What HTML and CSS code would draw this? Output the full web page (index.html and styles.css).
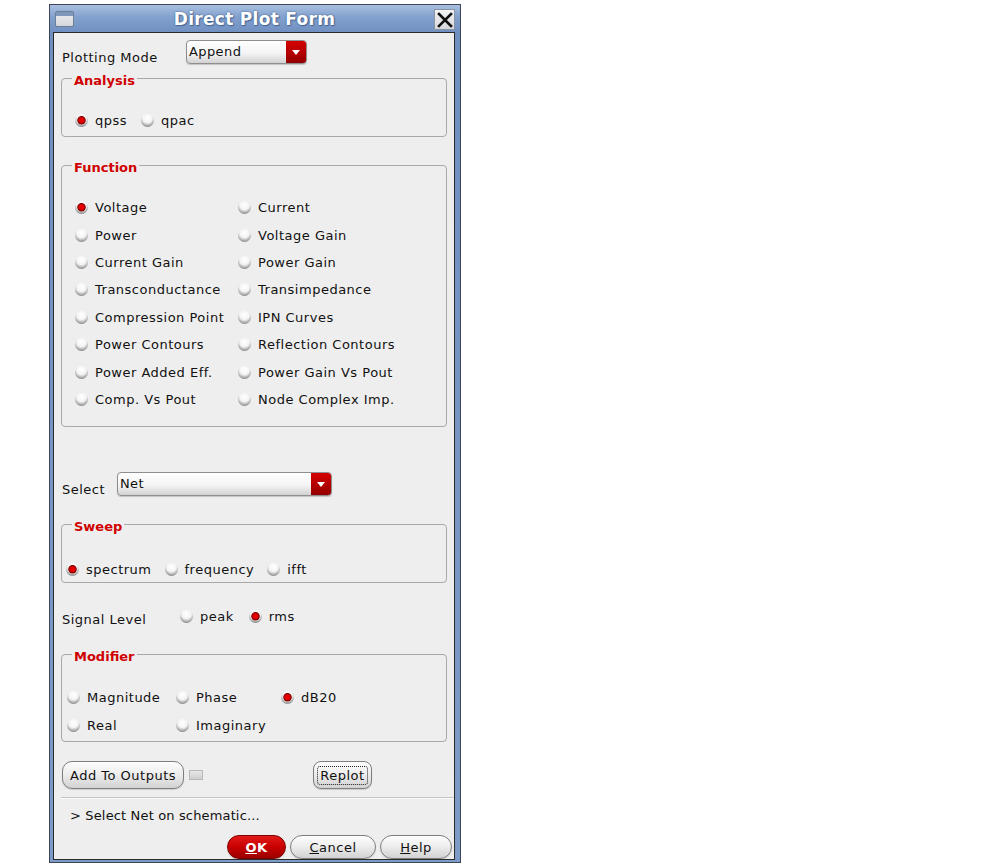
FILE: index.html
```html
<!DOCTYPE html>
<html>
<head>
<meta charset="utf-8">
<link rel="stylesheet" href="styles.css">
</head>
<body>
<div class="window">
  <div class="titlebar">
    <span class="win-icon"></span>
    <span class="title">Direct Plot Form</span>
    <span class="close-btn">
      <svg width="16" height="16" viewBox="0 0 16 16"><path d="M2 2 L14 14 M14 2 L2 14" stroke="#111" stroke-width="2.6" stroke-linecap="square"/></svg>
    </span>
  </div>
  <div class="content">
    <div class="row mode-row">
      <span class="label mode-label">Plotting Mode</span>
      <div class="combo combo-mode"><span class="combo-text">Append</span><span class="combo-arrow"></span></div>
    </div>

    <fieldset class="group analysis">
      <legend>Analysis</legend>
      <div class="inline-row analysis-row">
        <span class="opt"><span class="radio on"></span>qpss</span>
        <span class="opt"><span class="radio"></span>qpac</span>
      </div>
    </fieldset>

    <fieldset class="group function">
      <legend>Function</legend>
      <div class="func-grid">
        <span class="opt"><span class="radio on"></span>Voltage</span>
        <span class="opt"><span class="radio"></span>Current</span>
        <span class="opt"><span class="radio"></span>Power</span>
        <span class="opt"><span class="radio"></span>Voltage Gain</span>
        <span class="opt"><span class="radio"></span>Current Gain</span>
        <span class="opt"><span class="radio"></span>Power Gain</span>
        <span class="opt"><span class="radio"></span>Transconductance</span>
        <span class="opt"><span class="radio"></span>Transimpedance</span>
        <span class="opt"><span class="radio"></span>Compression Point</span>
        <span class="opt"><span class="radio"></span>IPN Curves</span>
        <span class="opt"><span class="radio"></span>Power Contours</span>
        <span class="opt"><span class="radio"></span>Reflection Contours</span>
        <span class="opt"><span class="radio"></span>Power Added Eff.</span>
        <span class="opt"><span class="radio"></span>Power Gain Vs Pout</span>
        <span class="opt"><span class="radio"></span>Comp. Vs Pout</span>
        <span class="opt"><span class="radio"></span>Node Complex Imp.</span>
      </div>
    </fieldset>

    <div class="row select-row">
      <span class="label select-label">Select</span>
      <div class="combo combo-select"><span class="combo-text">Net</span><span class="combo-arrow"></span></div>
    </div>

    <fieldset class="group sweep">
      <legend>Sweep</legend>
      <div class="inline-row sweep-row">
        <span class="opt"><span class="radio on"></span>spectrum</span>
        <span class="opt"><span class="radio"></span>frequency</span>
        <span class="opt"><span class="radio"></span>ifft</span>
      </div>
    </fieldset>

    <div class="row signal-row">
      <span class="label signal-label">Signal Level</span>
      <span class="opt"><span class="radio"></span>peak</span>
      <span class="opt"><span class="radio on"></span>rms</span>
    </div>

    <fieldset class="group modifier">
      <legend>Modifier</legend>
      <div class="mod-grid">
        <span class="opt"><span class="radio"></span>Magnitude</span>
        <span class="opt"><span class="radio"></span>Phase</span>
        <span class="opt"><span class="radio on"></span>dB20</span>
        <span class="opt"><span class="radio"></span>Real</span>
        <span class="opt"><span class="radio"></span>Imaginary</span>
      </div>
    </fieldset>

    <div class="row action-row">
      <span class="btn btn-add">Add To Outputs</span>
      <span class="mini-check"></span>
      <span class="btn btn-replot"><span class="focus">Replot</span></span>
    </div>

    <div class="separator"></div>

    <div class="status">&gt; Select Net on schematic...</div>

    <div class="row footer">
      <span class="btn btn-ok"><u>O</u>K</span>
      <span class="btn btn-cancel"><u>C</u>ancel</span>
      <span class="btn btn-help"><u>H</u>elp</span>
    </div>
  </div>
</div>
</body>
</html>
```
FILE: styles.css
```css
html, body {
  margin: 0;
  padding: 0;
  background: #ffffff;
}

body {
  font-family: "DejaVu Sans", "Liberation Sans", sans-serif;
  font-size: 13px;
  color: #111;
}

.window {
  margin: 4px 0 0 49px;
  width: 412px;
  box-sizing: border-box;
  border: 1px solid #3c4654;
  padding: 0 5px 2px 3px;
  background: linear-gradient(180deg, #a9bfe0 0px, #83a1cd 12px, #6f8fc1 28px, #7d9bc8 100%);
}

.titlebar {
  height: 27px;
  display: flex;
  align-items: center;
}

.win-icon {
  width: 17px;
  height: 14px;
  margin-left: 2px;
  margin-top: 1px;
  border: 1px solid #6b7f99;
  border-radius: 2px;
  background: linear-gradient(180deg, #7f97bb 0, #7f97bb 4px, #e6e8ec 4px, #d4d6da 100%);
}

.title {
  flex: 1;
  text-align: center;
  color: #ffffff;
  font-weight: bold;
  font-size: 17px;
  letter-spacing: 0.3px;
  text-shadow: 0 0 2px #3a5a8a, 1px 1px 1px #4a6a9a;
  padding-left: 1px;
}

.close-btn {
  width: 21px;
  height: 21px;
  margin-right: 0;
  margin-top: 2px;
  box-sizing: border-box;
  border: 1px solid #8a94a2;
  background: linear-gradient(180deg, #f4f4f4, #d6d8dc);
  display: flex;
  align-items: center;
  justify-content: center;
}

.content {
  border: 1px solid #2a2a2a;
  background: #eeeeee;
  width: 400px;
  padding: 0;
  overflow: hidden;
}

.row {
  display: flex;
}

.label {
  letter-spacing: 0.5px;
}

.opt {
  display: inline-flex;
  align-items: center;
  letter-spacing: 0.5px;
  height: 20px;
  white-space: nowrap;
}

.radio {
  width: 13px;
  height: 13px;
  border-radius: 50%;
  margin-right: 7px;
  flex: none;
  background: radial-gradient(circle at 50% 30%, #ffffff 0, #f4f4f4 42%, #c4c4c4 60%, #8a8a8a 80%, #6c6c6c 100%);
}

.radio.on {
  background:
    radial-gradient(circle at 50% 48%, #f20000 0, #d40000 2.8px, #7a0000 3.8px, rgba(120,0,0,0) 4.6px),
    radial-gradient(circle at 50% 30%, #ffffff 0, #f4f4f4 42%, #c4c4c4 60%, #8a8a8a 80%, #6c6c6c 100%);
}

/* Plotting mode */
.mode-row {
  margin-top: 7px;
  height: 24px;
  align-items: flex-end;
}

.mode-label {
  width: 124px;
  padding-left: 8px;
  line-height: 18px;
  margin-bottom: -3px;
}

.combo {
  height: 24px;
  box-sizing: border-box;
  border: 1px solid #8e8e8e;
  border-radius: 4px;
  background: linear-gradient(180deg, #ffffff 0, #f4f4f4 55%, #d2d2d2 100%);
  display: flex;
  overflow: hidden;
  box-shadow: 0 1px 1px rgba(0,0,0,0.18);
}

.combo-text {
  flex: 1;
  padding-left: 2px;
  padding-top: 2px;
  line-height: 18px;
  letter-spacing: 0.4px;
}

.combo-arrow {
  width: 20px;
  background: linear-gradient(180deg, #d40000, #b00000 60%, #900000);
  position: relative;
}

.combo-arrow::after {
  content: "";
  position: absolute;
  left: 6px;
  top: 9px;
  border-left: 4px solid transparent;
  border-right: 4px solid transparent;
  border-top: 5px solid #ffffff;
}

.combo-mode {
  width: 121px;
}

/* group boxes */
.group {
  margin: 0 0 0 7px;
  width: 386px;
  box-sizing: border-box;
  border: 1px solid #a9a9a9;
  border-radius: 4px;
  padding: 0;
  min-width: 0;
}

.group legend {
  margin-left: 10px;
  padding: 6px 2px 0 2px;
  color: #d00000;
  font-weight: bold;
  font-size: 13px;
  line-height: 16px;
}

.analysis {
  margin-top: 3px;
}

.analysis-row {
  padding: 21px 0 6px 13px;
  display: flex;
  gap: 14px;
}

.function {
  margin-top: 17px;
}

.func-grid {
  display: grid;
  grid-template-columns: 163px 1fr;
  grid-auto-rows: 27.4px;
  align-items: center;
  padding: 18px 0 13px 13px;
}

.select-row {
  margin-top: 45px;
  height: 24px;
  align-items: flex-end;
}

.select-label {
  width: 55px;
  padding-left: 8px;
  line-height: 18px;
  margin-bottom: -3px;
}

.combo-select {
  width: 215px;
}

.sweep {
  margin-top: 17px;
}

.sweep-row {
  display: flex;
  gap: 13px;
  padding: 24px 0 3px 4px;
}

.signal-row {
  margin-top: 23px;
  height: 20px;
  align-items: center;
}

.signal-label {
  width: 118px;
  padding-left: 8px;
  padding-top: 6px;
}

.signal-row .opt + .opt {
  margin-left: 15px;
}

.modifier {
  margin-top: 17px;
}

.mod-grid {
  display: grid;
  grid-template-columns: 109px 105px 1fr;
  grid-auto-rows: 20px;
  row-gap: 8px;
  padding: 22px 0 6px 5px;
}

/* buttons */
.action-row {
  margin-top: 19px;
  height: 28px;
  align-items: center;
  padding-left: 8px;
}

.btn {
  display: inline-flex;
  align-items: center;
  justify-content: center;
  box-sizing: border-box;
  border: 1px solid #7e7e7e;
  border-radius: 10px;
  background: linear-gradient(180deg, #fdfdfd 0, #eeeeee 45%, #d2d2d2 100%);
  letter-spacing: 0.5px;
  box-shadow: 0 1px 1px rgba(0,0,0,0.15);
}

.btn-add {
  width: 122px;
  height: 28px;
}

.mini-check {
  width: 14px;
  height: 10px;
  margin-left: 5px;
  box-sizing: border-box;
  border: 1px solid #b8b8b8;
  background: linear-gradient(180deg, #e6e6e6, #cfcfcf);
}

.btn-replot {
  width: 59px;
  height: 28px;
  margin-left: 110px;
  border-radius: 8px;
}

.btn-replot .focus {
  border: 1px dotted #222;
  padding: 1px 2px;
  border-radius: 3px;
}

.separator {
  margin: 8px 0 0 7px;
  height: 1px;
  background: #c4c4c4;
  box-shadow: 0 1px 0 #fafafa;
}

.status {
  margin-top: 8px;
  height: 20px;
  line-height: 20px;
  padding-left: 16px;
  letter-spacing: 0.15px;
}

.footer {
  margin-top: 9px;
  height: 24px;
  justify-content: flex-end;
  padding-right: 2px;
  gap: 4px;
}

.footer .btn {
  height: 24px;
  border-radius: 12px;
}

.btn-ok {
  width: 59px;
  color: #ffffff;
  font-weight: bold;
  border-color: #7a0000;
  background: linear-gradient(180deg, #e21a1a 0, #c80000 50%, #9c0000 100%);
}

.btn-cancel {
  width: 86px;
}

.btn-help {
  width: 72px;
}
```
